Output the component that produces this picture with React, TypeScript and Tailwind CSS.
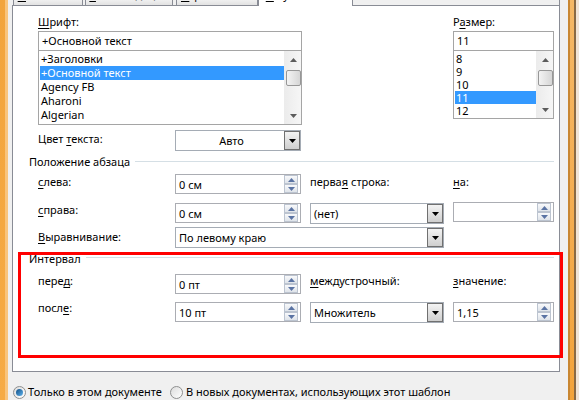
import React from 'react';

function U({ children }: { children: React.ReactNode }) {
    return <span className="underline decoration-1 underline-offset-[2px]">{children}</span>;
}

function Arrow({ up, color }: { up?: boolean; color: string }) {
    return (
        <svg width="7" height="4" viewBox="0 0 7 4">
            <path d={up ? 'M3.5 0 L7 4 L0 4 Z' : 'M0 0 L7 0 L3.5 4 Z'} fill={color} />
        </svg>
    );
}

function SpinBtn({ up }: { up?: boolean }) {
    return (
        <div className="flex h-[9px] w-[14px] items-center justify-center border border-[#bcc4d0] bg-gradient-to-b from-[#f8f9fb] to-[#dfe4ea]">
            <Arrow up={up} color="#5a73a3" />
        </div>
    );
}

function Spin({ value, className }: { value: string; className: string }) {
    return (
        <div className={'flex h-[20px] items-center border border-[#abadb3] bg-white pl-[3px] pr-[2px] ' + className}>
            <span className="flex-1 leading-none">{value}</span>
            <div className="flex flex-col">
                <SpinBtn up />
                <SpinBtn />
            </div>
        </div>
    );
}

function Drop({ value, className, center }: { value: string; className: string; center?: boolean }) {
    return (
        <div className={'flex h-[21px] items-center border border-[#a5acb5] bg-white pl-[3px] ' + className}>
            <span className={'flex-1 leading-none ' + (center ? 'text-center' : '')}>{value}</span>
            <div className="flex h-[19px] w-[16px] items-center justify-center border border-[#707070] bg-gradient-to-b from-[#f3f3f3] to-[#cfcfcf]">
                <Arrow color="#000" />
            </div>
        </div>
    );
}

function VScroll() {
    return (
        <div className="flex h-full w-[17px] flex-col items-center border-l border-[#ececec] bg-gradient-to-r from-[#ececec] to-[#f6f6f6]">
            <div className="flex h-[17px] w-full items-center justify-center">
                <Arrow up color="#5c5c5c" />
            </div>
            <div className="mt-[2px] h-[16px] w-[15px] rounded-[2px] border border-[#979797] bg-gradient-to-r from-[#f3f3f3] to-[#d6d6d6]" />
            <div className="flex-1" />
            <div className="flex h-[17px] w-full items-center justify-center">
                <Arrow color="#5c5c5c" />
            </div>
        </div>
    );
}

function ListBox({ items, sel, rowH, className }: { items: string[]; sel: number; rowH: string; className: string }) {
    return (
        <div className={'flex border border-[#a5a5a5] bg-white ' + className}>
            <div className="flex-1 pl-[1px] pt-[1px]">
                {items.map((it, i) => (
                    <div
                        key={i}
                        className={rowH + ' pl-[1px] ' + (i === sel ? 'bg-[#3399ff] text-white' : '')}
                    >
                        {it}
                    </div>
                ))}
            </div>
            <VScroll />
        </div>
    );
}

function Radio({ checked }: { checked?: boolean }) {
    return (
        <div className="flex h-[13px] w-[13px] shrink-0 items-center justify-center rounded-full border border-[#8e8f8f] bg-gradient-to-br from-[#dcdcdc] to-[#ffffff]">
            {checked && <div className="h-[7px] w-[7px] rounded-full bg-gradient-to-br from-[#0f4f86] to-[#5eb2ec]" />}
        </div>
    );
}

function Tab({ label, className, active }: { label: React.ReactNode; className: string; active?: boolean }) {
    return (
        <div
            className={
                'h-[6px] overflow-hidden border-x border-[#898c95] text-center ' +
                (active ? 'bg-white' : 'border-b bg-gradient-to-b from-[#f0f0f0] to-[#e2e2e2]') +
                ' ' + className
            }
        >
            <div className="mt-[-12px] whitespace-nowrap leading-[14px]">{label}</div>
        </div>
    );
}

export default function App() {
    return (
        <div className="relative flex h-[400px] w-[579px] overflow-hidden bg-[#f0f0f0] font-['Noto_Sans',sans-serif] text-[11px] leading-[16px] text-black">
            <div className="flex w-[8px]">
                <div className="w-[5px] bg-gradient-to-b from-[#f2a43c] to-[#f6ab45]" />
                <div className="w-[3px] bg-[#f9c47c]" />
            </div>

            <div className="flex w-[560px] flex-col pl-[4px] pr-[8px]">
                <div className="flex h-[6px]">
                    <div className="w-[1px] border-b border-[#898c95]" />
                    <Tab label={<><U>И</U>зменение</>} className="w-[70px]" />
                    <div className="w-[2px] border-b border-[#898c95]" />
                    <Tab label={<><U>Р</U>екомендации</>} className="w-[88px]" />
                    <div className="w-[3px] border-b border-[#898c95]" />
                    <Tab label={<><U>О</U>граничения</>} className="w-[82px]" />
                    <Tab label={<><U>П</U>о умолчанию</>} className="w-[95px]" active />
                    <div className="flex-1 border-b border-r border-[#898c95]" />
                </div>

                <div className="flex h-[374px] flex-col border-x border-b border-[#898c95] bg-white pt-[8px]">
                    <div className="flex pl-[25px]">
                        <div className="flex w-[264px] flex-col">
                            <div className="mb-[1px] h-[16px]"><U>Ш</U>рифт:</div>
                            <div className="flex h-[20px] items-center border border-[#a5a5a5] pl-[3px]">+Основной текст</div>
                            <ListBox
                                items={['+Заголовки', '+Основной текст', 'Agency FB', 'Aharoni', 'Algerian']}
                                sel={1}
                                rowH="h-[14px] leading-[14px]"
                                className="h-[74px] border-t-0"
                            />
                        </div>
                        <div className="ml-[151px] flex w-[101px] flex-col">
                            <div className="mb-[1px] h-[16px]">Р<U>а</U>змер:</div>
                            <div className="flex h-[20px] items-center border border-[#a5a5a5] pl-[3px]">11</div>
                            <ListBox items={['8', '9', '10', '11', '12']} sel={3} rowH="h-[13px] leading-[13px]" className="h-[68px] border-t-0" />
                        </div>
                    </div>

                    <div className="mt-[5px] flex items-center pl-[25px]">
                        <div className="w-[137px] pb-[4px]">Цвет <U>т</U>екста:</div>
                        <Drop value="Авто" className="w-[126px]" center />
                    </div>

                    <div className="mt-[3px] flex h-[16px] items-center pl-[16px] pr-[5px]">
                        <span>Положение абзаца</span>
                        <div className="ml-[5px] mt-[-1px] h-[1px] flex-1 bg-[#d5dfe5]" />
                    </div>

                    <div className="mt-[4px] flex items-center pl-[25px]">
                        <div className="w-[137px] pb-[4px]"><U>с</U>лева:</div>
                        <Spin value="0 см" className="w-[126px]" />
                        <div className="ml-[9px] w-[143px] pb-[4px]">перва<U>я</U> строка:</div>
                        <div className="pb-[4px]"><U>н</U>а:</div>
                    </div>

                    <div className="mt-[9px] flex items-start pl-[25px]">
                        <div className="w-[137px] mt-[-1px]"><U>с</U>права:</div>
                        <Spin value="0 см" className="w-[126px]" />
                        <Drop value="(нет)" className="ml-[9px] w-[134px]" />
                        <Spin value="" className="ml-[9px] mt-[-1px] w-[101px]" />
                    </div>

                    <div className="mt-[3px] flex items-center pl-[25px]">
                        <div className="w-[137px] pb-[2px]"><U>В</U>ыравнивание:</div>
                        <Drop value="По левому краю" className="w-[269px]" />
                    </div>

                    <div className="mt-[3px] flex h-[16px] items-center pl-[16px] pr-[5px]">
                        <span>Интервал</span>
                        <div className="ml-[5px] mt-[-3px] h-[1px] flex-1 bg-[#d5dfe5]" />
                    </div>

                    <div className="mt-[6px] flex items-center pl-[25px]">
                        <div className="w-[137px] pb-[6px]">пере<U>д</U>:</div>
                        <Spin value="0 пт" className="w-[126px]" />
                        <div className="ml-[9px] w-[143px] pb-[6px]"><U>м</U>еждустрочный:</div>
                        <div className="pb-[6px]"><U>з</U>начение:</div>
                    </div>

                    <div className="mt-[7px] flex items-start pl-[25px]">
                        <div className="w-[137px] mt-[-2px]">посл<U>е</U>:</div>
                        <Spin value="10 пт" className="w-[126px]" />
                        <Drop value="Множитель" className="ml-[9px] w-[134px]" />
                        <Spin value="1,15" className="ml-[9px] w-[101px]" />
                    </div>
                </div>

                <div className="mt-[12px] flex items-center whitespace-nowrap pl-[1px]">
                    <div className="flex w-[157px] items-center gap-[2px]">
                        <Radio checked />
                        <span>Только в этом документе</span>
                    </div>
                    <div className="flex items-center gap-[3px]">
                        <Radio />
                        <span>В новых документах, использующих этот шаблон</span>
                    </div>
                </div>
            </div>

            <div className="flex w-[11px]">
                <div className="w-[2px] bg-[#c98732]" />
                <div className="w-[4px] bg-gradient-to-b from-[#f5b866] to-[#f3a33a]" />
                <div className="w-[2px] bg-[#8a6a44]" />
                <div className="w-[3px] bg-[#f1e4d6]" />
            </div>

            <div className="absolute left-[18px] top-[252px] h-[106px] w-[545px] border-[3px] border-[#ff0000]" />
        </div>
    );
}
